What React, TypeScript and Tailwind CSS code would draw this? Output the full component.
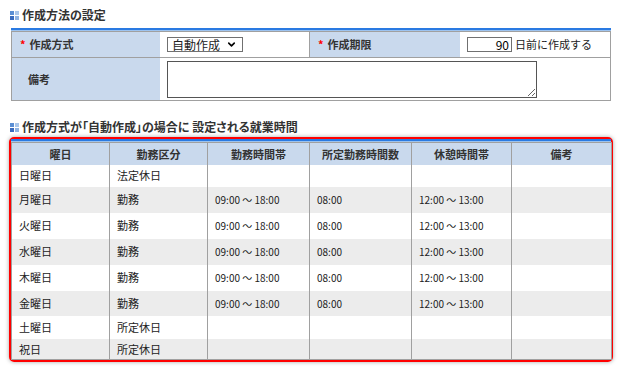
import { ChevronDown } from "lucide-react"

const rows = [
  { day: "日曜日", kind: "法定休日", work: "", hours: "", rest: "", h: "h-[22px]" },
  { day: "月曜日", kind: "勤務", work: "09:00 ～ 18:00", hours: "08:00", rest: "12:00 ～ 13:00", h: "h-[26px]" },
  { day: "火曜日", kind: "勤務", work: "09:00 ～ 18:00", hours: "08:00", rest: "12:00 ～ 13:00", h: "h-[26px]" },
  { day: "水曜日", kind: "勤務", work: "09:00 ～ 18:00", hours: "08:00", rest: "12:00 ～ 13:00", h: "h-[26px]" },
  { day: "木曜日", kind: "勤務", work: "09:00 ～ 18:00", hours: "08:00", rest: "12:00 ～ 13:00", h: "h-[26px]" },
  { day: "金曜日", kind: "勤務", work: "09:00 ～ 18:00", hours: "08:00", rest: "12:00 ～ 13:00", h: "h-[25px]" },
  { day: "土曜日", kind: "所定休日", work: "", hours: "", rest: "", h: "h-[23px]" },
  { day: "祝日", kind: "所定休日", work: "", hours: "", rest: "", h: "h-[21px]" },
]

const headers = ["曜日", "勤務区分", "勤務時間帯", "所定勤務時間数", "休憩時間帯", "備考"]

function TitleIcon() {
  return (
    <svg width="9" height="9" viewBox="0 0 9 9" className="shrink-0">
      <rect x="0" y="0" width="4" height="4" fill="#5b8fd4" />
      <rect x="0" y="5" width="4" height="4" fill="#3a6cbf" />
      <rect x="5" y="0" width="4" height="4" fill="#a9c6ea" />
      <rect x="5" y="5" width="4" height="4" fill="#8fb3e2" />
    </svg>
  )
}

function SectionTitle({ children, className }: { children: React.ReactNode; className?: string }) {
  return (
    <div className={"flex h-[18px] items-center gap-[3px] pl-[1px] " + (className ?? "")}>
      <TitleIcon />
      <h2 className="text-[12px] font-bold leading-none text-[#333] [font-feature-settings:'palt']">{children}</h2>
    </div>
  )
}

function BlueRule() {
  return (
    <div>
      <div className="h-[2px] bg-[#2a7ae2]" />
      <div className="h-px bg-[#9cc3f0]" />
    </div>
  )
}

function Required() {
  return <span className="mr-[4px] text-[11px] font-bold text-[#ff0000]">*</span>
}

export default function App() {
  return (
    <div className="h-[371px] w-[623px] overflow-hidden bg-white px-[9px] font-['Meiryo','Noto_Sans_CJK_JP',sans-serif] text-[#222]">
      <SectionTitle className="mt-[6px]">作成方法の設定</SectionTitle>

      {/* 作成方法 */}
      <div className="ml-[2px] mt-[4px] w-[600px]">
        <BlueRule />
        <div className="border border-[#a0a0a0] text-[11px]">
          <div className="flex h-[26px] border-b border-[#a0a0a0]">
            <div className="flex w-[148px] items-center bg-[#c9d9ed] pl-[8px] font-bold text-[#333]">
              <Required />
              作成方式
            </div>
            <div className="flex w-[150px] items-center border-r border-[#a0a0a0] pl-[7px]">
              <div className="flex h-[15px] w-[76px] items-center justify-between border border-[#707070] pl-[4px] pr-[5px] text-[12px] leading-none">
                <span>自動作成</span>
                <ChevronDown size={11} strokeWidth={3.5} className="text-black" />
              </div>
            </div>
            <div className="flex w-[150px] items-center bg-[#c9d9ed] pl-[8px] font-bold text-[#333]">
              <Required />
              作成期限
            </div>
            <div className="flex flex-1 items-center pl-[7px]">
              <div className="flex h-[15px] w-[45px] items-center justify-end border border-[#707070] pr-[2px] text-[12px] leading-none text-black">
                90
              </div>
              <span className="ml-[3px] text-[11px]">日前に作成する</span>
            </div>
          </div>
          <div className="flex h-[42px]">
            <div className="flex w-[148px] items-center bg-[#c9d9ed] pl-[16px] font-bold text-[#333]">備考</div>
            <div className="flex flex-1 items-center pl-[7px]">
              <textarea
                readOnly
                className="block h-[37px] w-[370px] resize-y border border-[#555] bg-white"
              />
            </div>
          </div>
        </div>
      </div>

      <SectionTitle className="mt-[17px]">作成方式が「自動作成」の場合に 設定される就業時間</SectionTitle>

      {/* 就業時間 */}
      <div className="mt-px w-[604px] rounded-[5px] border-2 border-[#ff0000] shadow-[0_0_4px_rgba(0,0,0,0.35)]">
        <BlueRule />
        <table className="w-full table-fixed border-collapse border border-[#a0a0a0] text-[11px]">
          <colgroup>
            <col className="w-[98px]" />
            <col className="w-[98px]" />
            <col className="w-[102px]" />
            <col className="w-[102px]" />
            <col className="w-[100px]" />
            <col className="w-[100px]" />
          </colgroup>
          <thead>
            <tr className="h-[22px] bg-[#c9d9ed]">
              {headers.map((h) => (
                <th key={h} className="border-x border-[#a0a0a0] p-0 text-center font-bold text-[#333]">
                  {h}
                </th>
              ))}
            </tr>
          </thead>
          <tbody>
            {rows.map((r, i) => (
              <tr key={r.day} className={`${r.h} ${i % 2 === 1 ? "bg-[#ececec]" : "bg-white"}`}>
                <td className="border-x border-[#a0a0a0] py-0 pl-[7px]">{r.day}</td>
                <td className="border-x border-[#a0a0a0] py-0 pl-[7px]">{r.kind}</td>
                <td className="border-x border-[#a0a0a0] py-0 pl-[7px] text-[10px]">{r.work}</td>
                <td className="border-x border-[#a0a0a0] py-0 pl-[7px] text-[10px]">{r.hours}</td>
                <td className="border-x border-[#a0a0a0] py-0 pl-[7px] text-[10px]">{r.rest}</td>
                <td className="border-x border-[#a0a0a0] py-0 pl-[7px]"></td>
              </tr>
            ))}
          </tbody>
        </table>
      </div>
    </div>
  )
}
